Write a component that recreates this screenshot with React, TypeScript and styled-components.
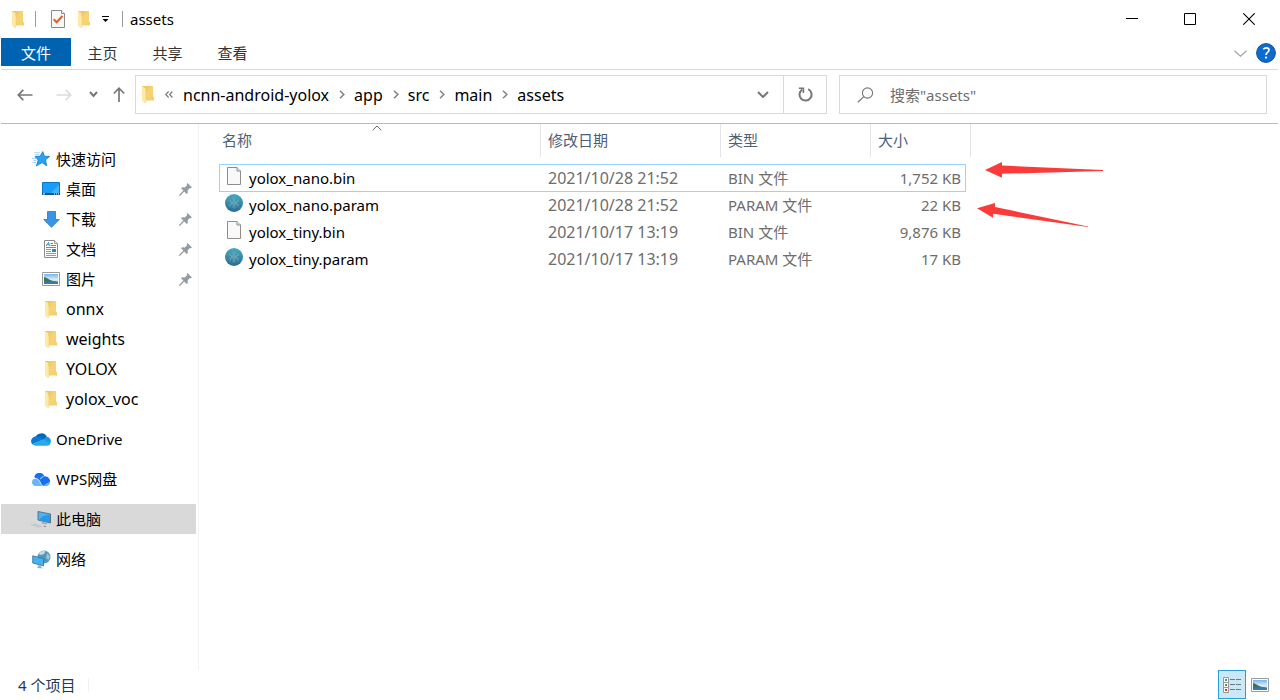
import React from 'react';
import styled, { createGlobalStyle, css } from 'styled-components';

const GlobalStyle = createGlobalStyle`
  *, *::before, *::after { box-sizing: border-box; }
  body {
    margin: 0;
    background: #fff;
    color: #000;
    font-family: "Noto Sans", "Noto Sans CJK SC", sans-serif;
    font-size: 15px;
    line-height: 20px;
  }
  button, input {
    font: inherit;
    color: inherit;
    border: 0;
    padding: 0;
    margin: 0;
    background: none;
  }
  a { color: inherit; text-decoration: none; }
  svg { display: block; flex: none; }
`;

/* ---------- layout ---------- */

const Window = styled.div`
  display: flex;
  flex-direction: column;
  min-height: 100vh;
  padding: 0 2px 0 1px;
`;

const TitleBar = styled.header`
  display: flex;
  align-items: center;
  height: 38px;
  padding-left: 10px;
`;

const Separator = styled.span<{ $before: number; $after: number }>`
  width: 1px;
  height: 16px;
  margin: 0 ${p => p.$after}px 0 ${p => p.$before}px;
  background: #9a9a9a;
`;

const QuickButton = styled.button<{ $width?: number }>`
  display: flex;
  align-items: center;
  justify-content: center;
  width: ${p => p.$width ?? 26}px;
  height: 26px;
`;

const Title = styled.h1`
  flex: 1;
  margin: 0;
  font-size: 15px;
  font-weight: 400;
  line-height: 20px;
`;

const CaptionButton = styled.button<{ $last?: boolean }>`
  display: flex;
  align-items: center;
  justify-content: center;
  width: ${p => (p.$last ? 59 : 58)}px;
  height: 38px;
`;

const Ribbon = styled.nav`
  display: flex;
  align-items: flex-start;
  height: 32px;
  border-bottom: 1px solid #dadada;
`;

const RibbonTab = styled.button<{ $primary?: boolean }>`
  width: ${p => (p.$primary ? 70 : 65)}px;
  height: 28px;
  padding: 2px ${p => (p.$primary ? 0 : 2)}px 0 0;
  line-height: 26px;
  color: ${p => (p.$primary ? '#fff' : '#333')};
  background: ${p => (p.$primary ? '#0063b1' : 'none')};
`;

const RibbonTools = styled.div`
  display: flex;
  align-items: center;
  gap: 9px;
  height: 30px;
  margin-left: auto;
  padding-right: 2px;
`;

const IconButton = styled.button`
  display: flex;
  align-items: center;
  justify-content: center;
`;

const AddressBar = styled.div`
  display: flex;
  align-items: center;
  height: 54px;
  padding: 0 11px 4px 16px;
  border-bottom: 1px solid #b9b9b9;
`;

const HistoryButtons = styled.div`
  display: flex;
  align-items: center;
  width: 118px;
`;

const HistoryButton = styled(IconButton)<{ $after?: number }>`
  height: 30px;
  margin-right: ${p => p.$after ?? 0}px;
`;

const PathBox = styled.div`
  display: flex;
  flex: 1;
  height: 39px;
  border: 1px solid #d9d9d9;
`;

const Crumbs = styled.ol`
  display: flex;
  flex: 1;
  align-items: center;
  margin: 0;
  padding: 0 0 0 5px;
  list-style: none;
  font-size: 16px;
`;

const Crumb = styled.li`
  display: flex;
  align-items: center;
  gap: 10px;
  & + & { margin-left: 9px; }
`;

const CrumbRoot = styled.li`
  display: flex;
  align-items: center;
  gap: 10px;
  margin-right: 10px;
`;

const PathButton = styled(IconButton)<{ $divided?: boolean }>`
  width: ${p => (p.$divided ? 43 : 40)}px;
  border-left: ${p => (p.$divided ? '1px solid #d9d9d9' : '0')};
`;

const SearchBox = styled.label`
  display: flex;
  flex: 0 1 428px;
  align-items: center;
  gap: 16px;
  height: 39px;
  margin-left: 12px;
  padding-left: 17px;
  border: 1px solid #d9d9d9;
`;

const SearchInput = styled.input`
  flex: 1;
  min-width: 0;
  outline: 0;
  &::placeholder { color: #6d6d6d; opacity: 1; }
`;

const Body = styled.div`
  display: flex;
  flex: 1;
`;

const Sidebar = styled.nav`
  width: 198px;
  padding: 20px 2px 0 0;
  border-right: 1px solid #f2f2f2;
`;

const NavGroup = styled.ul`
  margin: 0 0 10px;
  padding: 0;
  list-style: none;
`;

const NavLink = styled.a<{ $child?: boolean; $active?: boolean }>`
  display: flex;
  align-items: center;
  gap: 5px;
  height: 30px;
  padding: 0 4px 0 ${p => (p.$child ? 40 : 30)}px;
  background: ${p => (p.$active ? '#d9d9d9' : 'transparent')};
`;

const NavIcon = styled.span`
  display: flex;
  justify-content: center;
  width: 20px;
`;

const NavLabel = styled.span<{ $latin?: boolean }>`
  flex: 1;
  font-size: ${p => (p.$latin ? 16 : 15)}px;
`;

const Main = styled.main`
  position: relative;
  flex: 1;
  padding-left: 20px;
`;

const FileTable = styled.table`
  display: block;
  width: 752px;
`;

const Head = styled.thead`
  display: block;
  padding-bottom: 7px;
`;

const FileBody = styled.tbody`
  display: block;
  padding-right: 5px;
`;

const HeadRow = styled.tr`
  display: grid;
  grid-template-columns: 322px 180px 150px 100px;
`;

const HeadCell = styled.th<{ $first?: boolean }>`
  position: relative;
  height: 33px;
  padding: 0 0 0 ${p => (p.$first ? 3 : 7)}px;
  border-right: 1px solid #e5e5e5;
  color: #4c607a;
  font-weight: 400;
  line-height: 32px;
  text-align: left;
`;

const SortMark = styled.span`
  position: absolute;
  top: 1px;
  left: 153px;
`;

const FileRow = styled.tr<{ $selected?: boolean }>`
  display: grid;
  grid-template-columns: 321px 180px 150px 1fr;
  height: 28px;
  border: 1px solid ${p => (p.$selected ? '#99d1ff' : 'transparent')};
  & + & { margin-top: -1px; }
`;

const Cell = styled.td<{ $kind?: 'name' | 'date' | 'size' }>`
  padding: 0 4px 0 7px;
  color: #6d6d6d;
  line-height: 26px;
  ${p => p.$kind === 'name' && css`
    display: flex;
    align-items: center;
    gap: 5px;
    padding-left: 4px;
    color: #000;
  `}
  ${p => p.$kind === 'date' && css`font-size: 16px;`}
  ${p => p.$kind === 'size' && css`text-align: right;`}
`;

const FileIcon = styled.span`
  display: flex;
  justify-content: center;
  width: 20px;
  padding-bottom: 4px;
`;

const Annotations = styled.svg`
  position: absolute;
  top: 36px;
  left: 776px;
  pointer-events: none;
`;

const StatusBar = styled.footer`
  display: flex;
  align-items: center;
  height: 30px;
  padding: 0 4px 1px 17px;
  color: #1e395b;
`;

const ViewButton = styled(IconButton)<{ $on?: boolean }>`
  width: 28px;
  height: 29px;
  border: 1px solid ${p => (p.$on ? '#26a0da' : 'transparent')};
  background: ${p => (p.$on ? '#cbe8f6' : 'none')};
`;

const StatusText = styled.span`
  margin-right: auto;
  padding-right: 13px;
  border-right: 1px solid #f0f0f0;
  line-height: 14px;
`;

/* ---------- icons ---------- */

const FolderIcon = () => (
  <svg width="14" height="17" viewBox="-1 0 14 17">
    <defs>
      <linearGradient id="folderBack" x1="0" x2="1" y1="0" y2="1">
        <stop offset="0" stopColor="#e9bd58" />
        <stop offset=".5" stopColor="#f6d475" />
        <stop offset="1" stopColor="#f4cf6c" />
      </linearGradient>
    </defs>
    <path d="M0 0H11V10.5L12 11.5V14.5H2Z" fill="url(#folderBack)" />
    <path d="M0 0L3.6 2.3V4.8L4 5.5V15.2L3 17L0 15Z" fill="#ffe9a6" />
    <path d="M3.6 2.3V5L4 5.5V15.2L3 17" fill="none" stroke="#e8c670" strokeWidth=".5" />
  </svg>
);

const CheckIcon = () => (
  <svg width="14" height="18" viewBox="0 0 14 18">
    <path d="M.5 .5H10.5L13.5 3.5V17.5H.5Z" fill="#f7f8fa" stroke="#8a8a8a" />
    <path d="M10.5 .5V3.5H13.5" fill="#fff" stroke="#8a8a8a" />
    <path d="M2.7 9.3L5.6 12.2L11.4 6" fill="none" stroke="#f0591d" strokeWidth="2" />
  </svg>
);

const CustomizeIcon = () => (
  <svg width="7" height="6" viewBox="0 0 7 6">
    <path d="M0 0H7V1H0ZM.5 3H6.5L3.5 6Z" fill="#000" />
  </svg>
);

const MinimizeIcon = () => (
  <svg width="12" height="12" viewBox="0 0 12 12"><path d="M0 5.5H12" stroke="#000" /></svg>
);
const MaximizeIcon = () => (
  <svg width="12" height="12" viewBox="0 0 12 12"><path d="M.5 .5H11.5V11.5H.5Z" fill="none" stroke="#000" /></svg>
);
const CloseIcon = () => (
  <svg width="12" height="12" viewBox="0 0 12 12"><path d="M.3 .3L11.7 11.7M11.7 .3L.3 11.7" stroke="#000" strokeWidth="1.1" /></svg>
);

const ExpandIcon = () => (
  <svg width="13" height="7" viewBox="0 0 13 7">
    <path d="M.5 .7L6.5 6.2L12.5 .7" fill="none" stroke="#a8a8a8" strokeWidth="1.3" />
  </svg>
);

const HelpIcon = () => (
  <svg width="20" height="20" viewBox="0 0 20 20">
    <circle cx="10" cy="10" r="9.4" fill="#0a6cce" stroke="#1b4f86" />
    <path d="M7.3 6.3C8.2 5.3 9.3 4.9 10.3 4.9C12 4.9 13 5.9 13 7.1C13 9.4 10 9.4 10 12" fill="none" stroke="#fff" strokeWidth="1.7" />
    <circle cx="10" cy="14.6" r="1.1" fill="#fff" />
  </svg>
);

const BackIcon = () => (
  <svg width="16" height="12" viewBox="0 0 16 12">
    <path d="M1.3 6H15.5M6.3 .9L1.3 6L6.3 11.1" fill="none" stroke="#777" strokeWidth="1.7" />
  </svg>
);

const ForwardIcon = () => (
  <svg width="16" height="12" viewBox="0 0 16 12">
    <path d="M.5 6H14.7M9.7 .9L14.7 6L9.7 11.1" fill="none" stroke="#dcdcdc" strokeWidth="1.7" />
  </svg>
);

const UpIcon = () => (
  <svg width="12" height="15" viewBox="0 0 12 15">
    <path d="M6 1.2V15M.8 6.5L6 1.2L11.2 6.5" fill="none" stroke="#777" strokeWidth="1.7" />
  </svg>
);

const DownIcon = ({ width = 12 }: { width?: number }) => (
  <svg width={width} height="7" viewBox={`0 0 ${width} 7`}>
    <path d={`M1 1L${width / 2} ${width > 10 ? 6 : 5}L${width - 1} 1`} fill="none" stroke="#777" strokeWidth="2" />
  </svg>
);

const CrumbArrow = () => (
  <svg width="6" height="9" viewBox="0 0 6 9">
    <path d="M1 .8L4.8 4.5L1 8.2" fill="none" stroke="#858585" strokeWidth="1.6" />
  </svg>
);

const CrumbOverflow = () => (
  <svg width="8" height="7" viewBox="0 0 8 7">
    <path d="M3.6 .5L.8 3.5L3.6 6.5M7.4 .5L4.6 3.5L7.4 6.5" fill="none" stroke="#777" strokeWidth="1.1" />
  </svg>
);

const RefreshIcon = () => (
  <svg width="15" height="15" viewBox="0 0 15 15">
    <path d="M4.2 2.6A6 6 0 1 0 10.2 2.2" fill="none" stroke="#777" strokeWidth="2" />
    <path d="M.8 1.2H5.4V6" fill="none" stroke="#777" strokeWidth="1.6" />
  </svg>
);

const SearchIcon = () => (
  <svg width="17" height="16" viewBox="0 0 17 16">
    <circle cx="10.5" cy="6" r="5.1" fill="none" stroke="#777" strokeWidth="1.1" />
    <path d="M6.8 9.6L.9 15.3" stroke="#777" strokeWidth="1.2" />
  </svg>
);

const SortIcon = () => (
  <svg width="10" height="6" viewBox="0 0 10 6">
    <path d="M.7 5.3L5 1L9.3 5.3" fill="none" stroke="#6d6d6d" />
  </svg>
);

const StarIcon = () => (
  <svg width="18" height="16" viewBox="0 0 18 16">
    <path d="M10.8 .6L12.4 5.2L17.6 5.5L13.5 8.8L14.7 14.8L10 11.6L4.4 14.9L6.2 9L3 5.5L8 5.2Z" fill="#29a3f0" stroke="#0c78c9" strokeWidth=".8" />
    <path d="M2 1.7H8M3 3.6H7M0 7.4H4M1.3 9.4H4.4M.3 11.5H4" stroke="#8accf5" strokeWidth=".8" />
  </svg>
);

const DesktopIcon = () => (
  <svg width="18" height="14" viewBox="0 0 18 14">
    <path d="M.5 .5H17.5V12.5H.5Z" fill="#1a9df8" stroke="#0877c4" />
    <path d="M8 12L17 3V12Z" fill="#43b2ff" />
    <path d="M0 11H18V13H0Z" fill="#11548b" />
    <path d="M1 11.9H3M12 11.9H13M14 11.9H15M16 11.9H17" stroke="#fff" />
  </svg>
);

const DownloadIcon = () => (
  <svg width="17" height="17" viewBox="0 0 17 17">
    <path d="M4.5 .5H12.5V8.5H16.3L8.5 16.3L.7 8.5H4.5Z" fill="#3b93e5" stroke="#2577c7" strokeWidth=".8" />
  </svg>
);

const DocumentIcon = () => (
  <svg width="14" height="18" viewBox="0 0 14 18">
    <path d="M.5 .5H10.5L13.5 3.5V17.5H.5Z" fill="#fff" stroke="#8a8a8a" />
    <path d="M10.5 .5V3.5H13.5" fill="#e6e6e6" stroke="#8a8a8a" strokeWidth=".8" />
    <path d="M2.2 6L4.6 2.2L5.4 6M3.2 4.7H5.2M6.5 3.5H9M6.5 5.5H12M2 7.5H12" fill="none" stroke="#268fd3" strokeWidth=".9" />
    <path d="M2 9.5H7M2 11.5H7M2 13.5H12M2 15.5H12" stroke="#8c8c8c" strokeWidth=".9" />
    <path d="M8 9H12V12H8Z" fill="#3389b4" />
  </svg>
);

const PictureIcon = () => (
  <svg width="18" height="14" viewBox="0 0 18 14">
    <defs>
      <linearGradient id="sky" x1="0" x2="0" y1="0" y2="1">
        <stop offset="0" stopColor="#75b5ed" />
        <stop offset=".6" stopColor="#e1f1fa" />
        <stop offset="1" stopColor="#3b80b1" />
      </linearGradient>
    </defs>
    <path d="M.5 .5H17.5V13.5H.5Z" fill="#fff" stroke="#9a9a9a" />
    <path d="M2 2H16V12H2Z" fill="url(#sky)" />
    <path d="M2 5.2C5 5.2 7 8 11 9L16 10H2Z" fill="#3d7263" />
    <path d="M2 9.7C7 9 11 9 16 9.7V12H2Z" fill="#3b78a8" />
  </svg>
);

const CloudIcon = () => (
  <svg width="20" height="14" viewBox="0 0 20 14">
    <path d="M4 6.3A6.4 6.4 0 0 1 15.9 4.8L12 9Z" fill="#0864b8" />
    <path d="M4.2 4.6A4.7 4.7 0 0 0 1.2 12.3L12.5 7.6L8 4.7A6 6 0 0 0 4.2 4.6Z" fill="#0879d4" />
    <path d="M12 7.4L15.5 4.7A4.4 4.4 0 0 1 19.4 11L18 12.5Z" fill="#159ae4" />
    <path d="M1.2 12C2 13.1 3.3 13.7 4.7 13.7H16.1C17.8 13.7 19 12.7 19.5 11.4L12.2 7.3Z" fill="#29a8ed" />
  </svg>
);

const WpsIcon = () => (
  <svg width="18" height="13" viewBox="0 0 18 13">
    <path d="M2.3 4A5.3 5.3 0 0 1 12.4 3.2C15.7 3.2 18 5.4 18 8C18 11 15.9 13 13 13H10L5.2 6.2Z" fill="#196fed" />
    <path d="M10.5 13L18 8.5C17.8 11 15.9 13 13 13Z" fill="#6cb6fb" />
    <path d="M8 5.2C10 3 12 3.2 13.4 3.3C10.8 3.8 9.5 5 8.7 6.5Z" fill="#9bd0ff" />
    <path d="M0 9.3C0 6.6 2 5.3 4 5.3C7.8 5.3 8.5 10.2 10.4 13H4C1.6 13 0 11.5 0 9.3Z" fill="#63b6ff" />
    <path d="M2.3 5.8C5.6 4.8 7 7 8 9C9 11 9.6 12.2 11 13" fill="none" stroke="#e4f4ff" strokeWidth=".8" />
  </svg>
);

const ComputerIcon = () => (
  <svg width="20" height="17" viewBox="0 0 20 17">
    <path d="M7 .5L19.5 3V12L7 9Z" fill="#4db4f6" stroke="#526b7d" strokeWidth=".9" />
    <path d="M12 5L19 3.5V11.4L8 8.7Z" fill="#279ae8" />
    <path d="M11.5 11L16 12.2V13.3L10 12.2Z" fill="#8fa3b1" />
    <path d="M0 13.5L8.5 16.2M2 12.6L10.8 15.4" stroke="#b4bec6" strokeWidth=".9" />
    <path d="M12.5 15L15 15.7" stroke="#7a8c99" />
  </svg>
);

const NetworkIcon = () => (
  <svg width="19" height="19" viewBox="0 0 19 19">
    <circle cx="12" cy="7" r="6.5" fill="#5896b9" />
    <path d="M7 3C9 1 12 .7 13.5 1.5L12 4L9 5L7.4 4.6Z" fill="#b8dfe9" />
    <path d="M15 3L18 6.2L16.5 10L14 8Z" fill="#95c5d8" />
    <path d="M.7 5.8L11.6 8.6V15.9L.7 13Z" fill="#43b1f5" stroke="#3d6d8b" strokeWidth=".8" />
    <path d="M6 15L9 16V17.3L12 18.2H7L4.5 17.2L6 16.7Z" fill="#9badb8" />
  </svg>
);

const PinIcon = () => (
  <svg width="13" height="13" viewBox="0 0 13 13">
    <path d="M8.5 0L13 4.5L11.7 5.2L10.9 5L8.7 7.3L8.8 9.9L7.7 11L5.2 8.5L1.2 12.7L0 13L.3 11.8L4.4 7.6L2 5.2L3.2 4.2L5.8 4.4L8 2.2L7.8 1Z" fill="#929ca5" />
  </svg>
);

const BlankFileIcon = () => (
  <svg width="14" height="18" viewBox="0 0 14 18">
    <path d="M.5 .5H10L13.5 4V17.5H.5Z" fill="#f9f9f9" stroke="#8d8d8d" />
    <path d="M10 .5V4H13.5" fill="#e8e8e8" stroke="#8d8d8d" />
  </svg>
);

const ParamIcon = () => (
  <svg width="18" height="18" viewBox="0 0 18 18">
    <defs>
      <linearGradient id="paramBall" x1="0" x2="0" y1="0" y2="1">
        <stop offset="0" stopColor="#45aabf" />
        <stop offset="1" stopColor="#2a6b91" />
      </linearGradient>
    </defs>
    <circle cx="9" cy="9" r="9" fill="url(#paramBall)" />
    <g fill="none" stroke="#8cb6c3" strokeWidth=".7" opacity=".7">
      <path d="M9 3V15M3.5 6.8L14.5 11.2M3.5 11.2L14.5 6.8M6.8 4L9 6.5L11.2 4M6.8 14L9 11.5L11.2 14M4.8 4.8L6.5 9L4.8 13.2M13.2 4.8L11.5 9L13.2 13.2" />
      <circle cx="9" cy="9" r="2.2" />
    </g>
  </svg>
);

const DetailsIcon = () => (
  <svg width="18" height="16" viewBox="0 0 18 16">
    <path d="M.5 .5H5.5V5.5H.5ZM.5 5.5H5.5V10.5H.5ZM.5 10.5H5.5V15.5H.5Z" fill="#fff" stroke="#999" />
    <path d="M2 2H4V4H2Z" fill="#319c9b" />
    <path d="M2 7H4V9H2Z" fill="#7b7d55" />
    <path d="M2 12H4V14H2Z" fill="#d83620" />
    <path d="M7 2.5H12M13 2.5H18M7 7.5H12M13 7.5H18M7 12.5H12M13 12.5H18" stroke="#6a7b80" />
  </svg>
);

/* ---------- content ---------- */

type NavEntry = {
  label: string;
  icon: React.ReactNode;
  pinned?: boolean;
  child?: boolean;
  active?: boolean;
  latin?: boolean;
};

const navGroups: NavEntry[][] = [
  [
    { label: '快速访问', icon: <StarIcon /> },
    { label: '桌面', icon: <DesktopIcon />, pinned: true, child: true },
    { label: '下载', icon: <DownloadIcon />, pinned: true, child: true },
    { label: '文档', icon: <DocumentIcon />, pinned: true, child: true },
    { label: '图片', icon: <PictureIcon />, pinned: true, child: true },
    { label: 'onnx', icon: <FolderIcon />, child: true, latin: true },
    { label: 'weights', icon: <FolderIcon />, child: true, latin: true },
    { label: 'YOLOX', icon: <FolderIcon />, child: true, latin: true },
    { label: 'yolox_voc', icon: <FolderIcon />, child: true, latin: true },
  ],
  [{ label: 'OneDrive', icon: <CloudIcon /> }],
  [{ label: 'WPS网盘', icon: <WpsIcon /> }],
  [{ label: '此电脑', icon: <ComputerIcon />, active: true }],
  [{ label: '网络', icon: <NetworkIcon /> }],
];

const path = ['ncnn-android-yolox', 'app', 'src', 'main', 'assets'];

const files = [
  { name: 'yolox_nano.bin', date: '2021/10/28 21:52', type: 'BIN 文件', size: '1,752 KB' },
  { name: 'yolox_nano.param', date: '2021/10/28 21:52', type: 'PARAM 文件', size: '22 KB' },
  { name: 'yolox_tiny.bin', date: '2021/10/17 13:19', type: 'BIN 文件', size: '9,876 KB' },
  { name: 'yolox_tiny.param', date: '2021/10/17 13:19', type: 'PARAM 文件', size: '17 KB' },
];

export default function App() {
  return (
    <>
      <GlobalStyle />
      <Window>
        <TitleBar>
          <FolderIcon />
          <Separator $before={10} $after={9} />
          <QuickButton aria-label="属性"><CheckIcon /></QuickButton>
          <QuickButton aria-label="新建文件夹"><FolderIcon /></QuickButton>
          <QuickButton aria-label="自定义快速访问工具栏" $width={17}><CustomizeIcon /></QuickButton>
          <Separator $before={8} $after={7} />
          <Title>assets</Title>
          <CaptionButton aria-label="最小化"><MinimizeIcon /></CaptionButton>
          <CaptionButton aria-label="最大化"><MaximizeIcon /></CaptionButton>
          <CaptionButton aria-label="关闭" $last><CloseIcon /></CaptionButton>
        </TitleBar>

        <Ribbon>
          <RibbonTab $primary>文件</RibbonTab>
          <RibbonTab>主页</RibbonTab>
          <RibbonTab>共享</RibbonTab>
          <RibbonTab>查看</RibbonTab>
          <RibbonTools>
            <IconButton aria-label="展开功能区"><ExpandIcon /></IconButton>
            <IconButton aria-label="帮助"><HelpIcon /></IconButton>
          </RibbonTools>
        </Ribbon>

        <AddressBar>
          <HistoryButtons>
            <HistoryButton aria-label="后退" $after={23}><BackIcon /></HistoryButton>
            <HistoryButton aria-label="前进" $after={17}><ForwardIcon /></HistoryButton>
            <HistoryButton aria-label="最近浏览的位置" $after={15}><DownIcon width={9} /></HistoryButton>
            <HistoryButton aria-label="上移"><UpIcon /></HistoryButton>
          </HistoryButtons>
          <PathBox>
            <Crumbs>
              <CrumbRoot><FolderIcon /><CrumbOverflow /></CrumbRoot>
              {path.map((part, i) => (
                <Crumb key={part}>
                  <a href="#">{part}</a>
                  {i < path.length - 1 && <CrumbArrow />}
                </Crumb>
              ))}
            </Crumbs>
            <PathButton aria-label="以前的位置"><DownIcon /></PathButton>
            <PathButton aria-label="刷新" $divided><RefreshIcon /></PathButton>
          </PathBox>
          <SearchBox>
            <SearchIcon />
            <SearchInput type="text" aria-label="搜索" placeholder={'搜索"assets"'} />
          </SearchBox>
        </AddressBar>

        <Body>
          <Sidebar>
            {navGroups.map(group => (
              <NavGroup key={group[0].label}>
                {group.map(item => (
                  <li key={item.label}>
                    <NavLink href="#" $child={item.child} $active={item.active}>
                      <NavIcon>{item.icon}</NavIcon>
                      <NavLabel $latin={item.latin}>{item.label}</NavLabel>
                      {item.pinned && <PinIcon />}
                    </NavLink>
                  </li>
                ))}
              </NavGroup>
            ))}
          </Sidebar>

          <Main>
            <FileTable>
              <Head>
                <HeadRow>
                  <HeadCell $first>名称<SortMark><SortIcon /></SortMark></HeadCell>
                  <HeadCell>修改日期</HeadCell>
                  <HeadCell>类型</HeadCell>
                  <HeadCell>大小</HeadCell>
                </HeadRow>
              </Head>
              <FileBody>
                {files.map((file, i) => (
                  <FileRow key={file.name} $selected={i === 0}>
                    <Cell $kind="name">
                      <FileIcon>{file.name.endsWith('.bin') ? <BlankFileIcon /> : <ParamIcon />}</FileIcon>
                      {file.name}
                    </Cell>
                    <Cell $kind="date">{file.date}</Cell>
                    <Cell>{file.type}</Cell>
                    <Cell $kind="size">{file.size}</Cell>
                  </FileRow>
                ))}
              </FileBody>
            </FileTable>
            <Annotations width="132" height="70" viewBox="0 0 132 70">
              <path d="M10 10L27 2V5.6L128 10V11L27 13.8V17.8Z" fill="#fb3a3a" />
              <path d="M2 48.2L20 43V47L113 66.5V67L18.3 53.7L18 57.8Z" fill="#fb3a3a" />
            </Annotations>
          </Main>
        </Body>

        <StatusBar>
          <StatusText>4 个项目</StatusText>
          <ViewButton aria-label="详细信息" $on><DetailsIcon /></ViewButton>
          <ViewButton aria-label="大图标"><PictureIcon /></ViewButton>
        </StatusBar>
      </Window>
    </>
  );
}
